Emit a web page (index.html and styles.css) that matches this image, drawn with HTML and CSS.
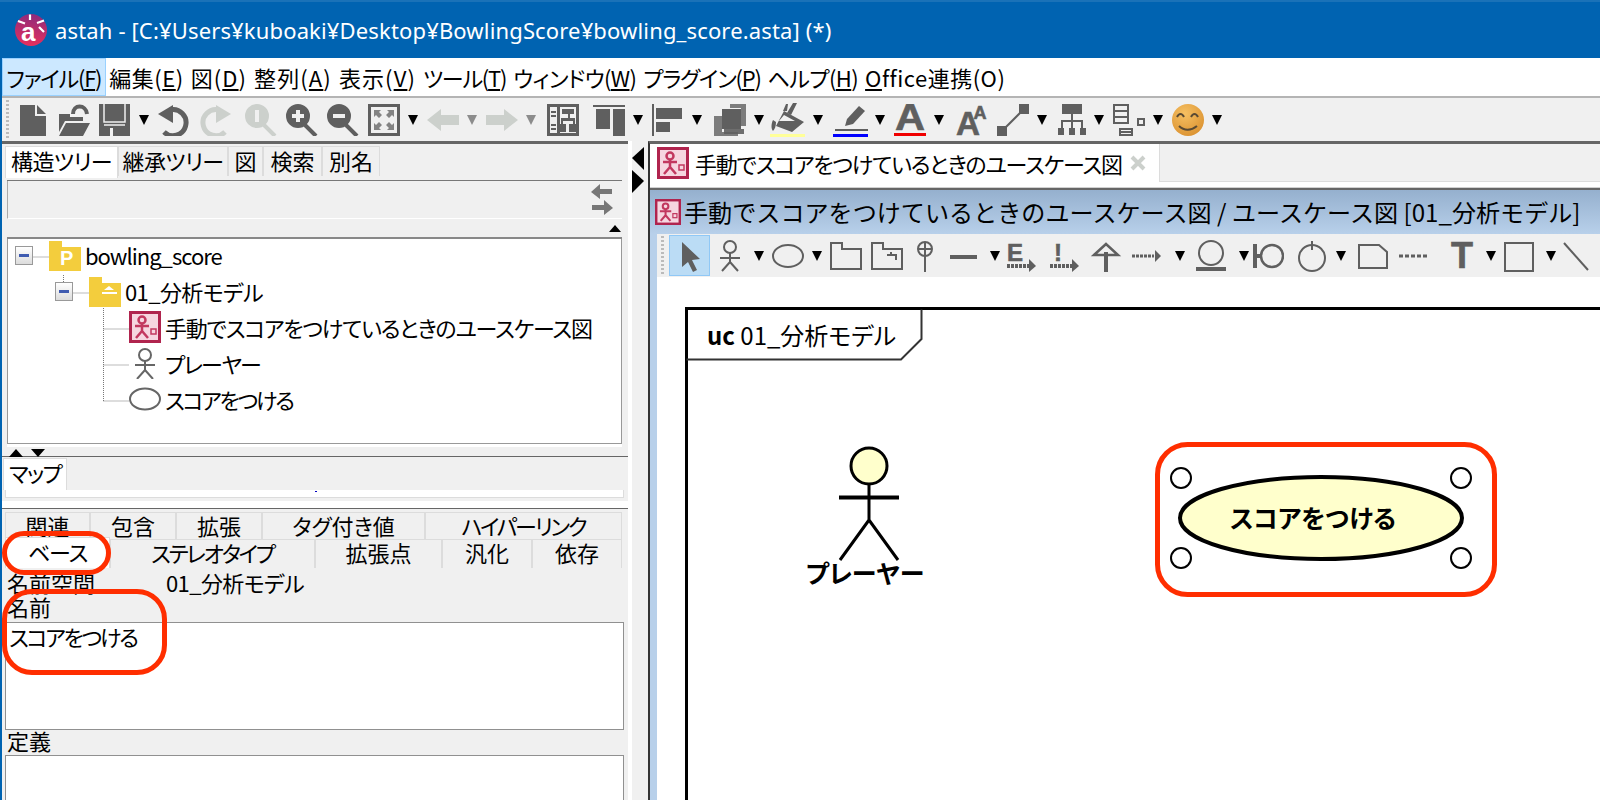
FILE: index.html
```html
<!DOCTYPE html>
<html lang="ja">
<head>
    <meta charset="UTF-8">
    <title>astah</title>
    <link rel="stylesheet" href="styles.css">
</head>
<body>
    <header class="titlebar">
        <svg class="app-logo" viewBox="0 0 32 32">
            <defs>
                <linearGradient id="logoFill" x1="0.6" y1="0" x2="0.5" y2="1">
                    <stop offset="0" stop-color="#8d2b7c"/>
                    <stop offset="1" stop-color="#e62f5c"/>
                </linearGradient>
            </defs>
            <circle cx="16" cy="16" r="16" fill="url(#logoFill)"/>
            <path d="M15 0.500v5.500M3 7l7 2.500M29 6.500l-7 2.500M24 13l5 5" stroke="#fff" stroke-width="2.200" fill="none"/>
            <text x="6" y="27" class="logo-a">a</text>
        </svg>
        <span class="app-title">astah - [C:¥Users¥kuboaki¥Desktop¥BowlingScore¥bowling_score.asta] (*)</span>
    </header>

    <div class="window">
        <nav class="menubar">
            <span class="menu active tight2">ファイル(<u>F</u>)</span>
            <span class="menu wide1">編集(<u>E</u>)</span>
            <span class="menu wide2">図(<u>D</u>)</span>
            <span class="menu wide2">整列(<u>A</u>)</span>
            <span class="menu wide2">表示(<u>V</u>)</span>
            <span class="menu tight2">ツール(<u>T</u>)</span>
            <span class="menu tight1">ウィンドウ(<u>W</u>)</span>
            <span class="menu tight2">プラグイン(<u>P</u>)</span>
            <span class="menu tight1">ヘルプ(<u>H</u>)</span>
            <span class="menu wide1"><u>O</u>ffice連携(O)</span>
        </nav>

        <div class="toolbar main-tools">
            <i class="grip"></i>
            <svg class="ic" viewBox="0 0 32 32"><path d="M3 1h15v11h11v20H3zM20 1l9 9h-9z"/></svg>
            <svg class="ic" viewBox="0 0 32 32"><path d="M1 10h11v3h13v4H7L1 28zM8 19h24l-7 13H1z"/><path d="M15 10c0-10 13-10 14 0" fill="none" stroke="currentColor" stroke-width="4"/></svg>
            <svg class="ic" viewBox="0 0 32 32"><path d="M0 0h31v32H0z"/><path d="M5 0v18h21V0M5 21h21" fill="none" stroke="#f0f0f0" stroke-width="1.500"/><path d="M11 24h3v8h-3z" fill="#f0f0f0"/></svg>
            <i class="arrow"></i>
            <svg class="ic" viewBox="0 0 32 32"><path d="M12 6a13 13 0 1 1-6 22" fill="none" stroke="currentColor" stroke-width="5"/><path d="M0 10l15-9v18z"/></svg>
            <svg class="ic off" viewBox="0 0 32 32"><path d="M20 6a13 13 0 1 0 6 22" fill="none" stroke="currentColor" stroke-width="5"/><path d="M32 10l-15-9v18z"/></svg>
            <svg class="ic off ml5" viewBox="0 0 32 32"><path fill-rule="evenodd" d="M12 0a12 12 0 1 1 0 24a12 12 0 1 1 0-24zM10 6v12h4V6z"/><path d="M19 21l11 11" stroke="currentColor" stroke-width="4"/></svg>
            <svg class="ic" viewBox="0 0 32 32"><path fill-rule="evenodd" d="M12 0a12 12 0 1 1 0 24a12 12 0 1 1 0-24zM10 6v4H6v4h4v4h4v-4h4v-4h-4V6z"/><path d="M19 21l11 11" stroke="currentColor" stroke-width="4"/></svg>
            <svg class="ic" viewBox="0 0 32 32"><path fill-rule="evenodd" d="M12 0a12 12 0 1 1 0 24a12 12 0 1 1 0-24zM6 10v4h12v-4z"/><path d="M19 21l11 11" stroke="currentColor" stroke-width="4"/></svg>
            <svg class="ic" viewBox="0 0 32 32"><path fill-rule="evenodd" d="M0 0h32v32H0zM3 3v26h26V3z"/><path d="M6 6h7l-2 2 3 3-3 3-3-3-2 2zM26 6v7l-2-2-3 3-3-3 3-3-2-2zM6 26v-7l2 2 3-3 3 3-3 3 2 2zM26 26h-7l2-2-3-3 3-3 3 3 2-2z" opacity=".75"/></svg>
            <i class="arrow"></i>
            <svg class="ic off" viewBox="0 0 32 32"><path d="M0 16L14 5v6h18v10H14v6z"/></svg>
            <i class="arrow dim"></i>
            <svg class="ic off" viewBox="0 0 32 32"><path d="M32 16L18 5v6H0v10h18v6z"/></svg>
            <i class="arrow dim"></i>
            <svg class="ic ml2" viewBox="0 0 32 32"><path fill-rule="evenodd" d="M0 0h32v32H0zM3 3v26h7V3zM13 3v26h16V3z"/><path d="M4 7h5v2H4zM4 11h5v2H4zM4 20h5v2H4zM4 24h5v2H4zM15 5h12v5h-4v4h5v6h2v8h-8v-8h4v-3H16v3h3v8h-8v-8h3v-6h7v-4h-6z"/></svg>
            <svg class="ic ml5" viewBox="0 0 32 32"><path d="M0 1h32v2H0zM3 5h14v20H3zM20 5h12v31H20z"/></svg>
            <i class="arrow"></i>
            <svg class="ic" viewBox="0 0 32 32"><path d="M0 0h2v32H0zM4 4h26v11H4zM4 18h14v10H4z"/></svg>
            <i class="arrow"></i>
            <svg class="ic ml3" viewBox="0 0 32 32"><path d="M10 6h5v19h15v5H10z" opacity=".9"/><path d="M0 12h8v16h16v4H0zM16 0h16v22h-5V4H16z" opacity=".8"/><path d="M8 5h19v20H8z"/></svg>
            <i class="arrow"></i>
            <svg class="ic wide-ic" viewBox="0 0 32 32"><path fill-rule="evenodd" d="M11 7l20 11-12 10-16-6zM11 11l-5 6h16z"/><path d="M14 9l6-10h4l-6 12zM10 7l3-7h2l-1 7zM0 16c-2 4-2 9 0 11 2-2 3-5 3-9z"/><path d="M-3 30h35v3H-3z" fill="#ffff99"/></svg>
            <i class="arrow"></i>
            <svg class="ic wide-ic" viewBox="0 0 32 32"><path d="M13 22l2-7L27 2l6 5-12 13z"/><path d="M3 25h33v2H3z"/><path d="M1 30h35v3H1z" fill="#0000ff"/></svg>
            <i class="arrow ml2"></i>
            <svg class="ic" viewBox="0 0 32 32"><text x="16" y="26" class="ic-letter" textLength="30" lengthAdjust="spacingAndGlyphs">A</text><path d="M0 29h32v3H0z" fill="#f00000"/></svg>
            <i class="arrow"></i>
            <svg class="ic ml3" viewBox="0 0 32 32"><text x="12" y="31" class="ic-letter big" textLength="24" lengthAdjust="spacingAndGlyphs">A</text><text x="24" y="15" class="ic-letter small">A</text></svg>
            <svg class="ic" viewBox="0 0 32 32"><path d="M0 22h10v10H0zM22 0h10v10H22z"/><path d="M7 25L25 7" stroke="currentColor" stroke-width="2"/></svg>
            <i class="arrow"></i>
            <svg class="ic" viewBox="0 0 32 32"><path d="M6 0h20v10H6zM15 10h2v6h10v8h-2v-6h-8v6h-2v-6H7v6H5v-8h10zM2 24h6v7H2zM13 24h6v7h-6zM24 24h6v7h-6z"/></svg>
            <i class="arrow mn3"></i>
            <svg class="ic" viewBox="0 0 32 32"><path fill-rule="evenodd" d="M0 0h16v20H0zM2 2v4h12V2zM2 8v4h12V8zM2 14v4h12v-4zM6 24h14v8H6zM8 26v1h10v-1zM8 29v1h10v-1zM24 14h8v8h-8zM26 16v4h4v-4z"/></svg>
            <i class="arrow"></i>
            <svg class="ic smile" viewBox="0 0 32 32">
                <defs>
                    <radialGradient id="smileFill" cx="0.4" cy="0.3" r="0.8">
                        <stop offset="0" stop-color="#f6c062"/>
                        <stop offset="1" stop-color="#d98f2e"/>
                    </radialGradient>
                </defs>
                <circle cx="16" cy="16" r="16" fill="url(#smileFill)"/>
                <path d="M5 13c2-4 5-4 7 0M19 13c2-4 5-4 7 0M7 22c5 5 12 5 18 0" fill="none" stroke="#5a4a33" stroke-width="2"/>
            </svg>
            <i class="arrow"></i>
        </div>

        <div class="workspace">
            <section class="left">
                <div class="tabs">
                    <span class="tab active tight1">構造ツリー</span>
                    <span class="tab tight1">継承ツリー</span>
                    <span class="tab">図</span>
                    <span class="tab">検索</span>
                    <span class="tab">別名</span>
                </div>
                <div class="tree-box">
                    <div class="tree-tools">
                        <svg class="swap" viewBox="0 0 24 34"><path d="M1 9l9-8v5h12v5H10v5zM23 25l-9-8v5H2v5h12v5z"/></svg>
                    </div>
                    <div class="tree-strip"><i class="mini-up"></i></div>
                    <div class="tree">
                        <svg class="tree-lines" viewBox="0 0 612 204">
                            <path d="M25.500 18H41M55.500 36v10M65.500 54H81M95.500 69v93M95.500 90H121M95.500 126H121M95.500 162H121"/>
                        </svg>
                        <div class="tree-row lv0">
                            <i class="expander"></i>
                            <svg class="tree-ic" viewBox="0 0 32 32"><path class="folder" d="M0 2h13v6h19v24H0z"/><text x="11" y="26" class="folder-p">P</text></svg>
                            <span class="latin-tight">bowling_score</span>
                        </div>
                        <div class="tree-row lv1">
                            <i class="expander"></i>
                            <svg class="tree-ic" viewBox="0 0 32 32"><path class="folder" d="M0 2h13v6h19v24H0z"/><path d="M15 15l5-4 5 4zM13 17h15v2H13z" fill="#fff"/></svg>
                            <span class="tight1">01_分析モデル</span>
                        </div>
                        <div class="tree-row lv2">
                            <svg class="tree-ic" viewBox="0 0 32 32"><use href="#ucIcon"/></svg>
                            <span class="tight2">手動でスコアをつけているときのユースケース図</span>
                        </div>
                        <div class="tree-row lv2">
                            <svg class="tree-ic" viewBox="0 0 32 32"><circle cx="16" cy="8" r="6" fill="none" stroke="#666" stroke-width="2"/><path d="M16 14v9M6 18h20M16 23L8 32M16 23l8 9" fill="none" stroke="#666" stroke-width="2"/></svg>
                            <span class="tight3">プレーヤー</span>
                        </div>
                        <div class="tree-row lv2">
                            <svg class="tree-ic" viewBox="0 0 32 32"><ellipse cx="16" cy="16" rx="15" ry="10.500" fill="none" stroke="#666" stroke-width="2"/></svg>
                            <span class="tight4">スコアをつける</span>
                        </div>
                    </div>
                </div>
                <div class="split-handle"><i class="mini-up wide"></i><i class="mini-down wide"></i></div>
                <div class="map-area">
                    <div class="map-tabs"><span class="tab active tight3">マップ</span></div>
                    <div class="map-view"><i class="map-dot"></i></div>
                </div>
                <div class="detail">
                    <div class="detail-tabs row-top">
                        <span class="dtab">関連</span>
                        <span class="dtab">包含</span>
                        <span class="dtab">拡張</span>
                        <span class="dtab">タグ付き値</span>
                        <span class="dtab tight4">ハイパーリンク</span>
                    </div>
                    <div class="detail-tabs row-bottom">
                        <span class="dtab active tight2">ベース</span>
                        <span class="dtab tight4">ステレオタイプ</span>
                        <span class="dtab">拡張点</span>
                        <span class="dtab">汎化</span>
                        <span class="dtab">依存</span>
                    </div>
                    <div class="ns-row"><span class="ns-label">名前空間</span><span class="tight1">01_分析モデル</span></div>
                    <div class="field-label">名前</div>
                    <div class="field name-field tight4">スコアをつける</div>
                    <div class="field-label def-label">定義</div>
                    <div class="field def-field"></div>
                </div>
                <i class="ring ring-base"></i>
                <i class="ring ring-name"></i>
            </section>

            <div class="splitter">
                <i class="tri-left"></i>
                <i class="tri-right"></i>
            </div>

            <section class="right">
                <div class="doc-tabs">
                    <span class="doc-tab">
                        <svg class="doc-ic" viewBox="0 0 32 32">
                            <symbol id="ucIcon" viewBox="0 0 32 32">
                                <rect x="1.500" y="1.500" width="29" height="29" fill="#f6d6e0" stroke="#b0244e" stroke-width="3"/>
                                <circle cx="13" cy="9" r="3.500" fill="none" stroke="#c2385f" stroke-width="2.500"/>
                                <path d="M13 12v8M6 15h14M13 20l-6 7M13 20l6 7" fill="none" stroke="#c2385f" stroke-width="2.500"/>
                                <rect x="22" y="18" width="5" height="5" fill="none" stroke="#c2385f" stroke-width="1.500"/>
                            </symbol>
                            <use href="#ucIcon"/>
                        </svg>
                        <span class="doc-name tight2">手動でスコアをつけているときのユースケース図</span>
                        <svg class="doc-close" viewBox="0 0 16 16"><path d="M2 2l12 12M14 2L2 14" stroke="#ccd0cc" stroke-width="4"/></svg>
                    </span>
                </div>
                <div class="doc-gap"></div>
                <div class="doc-head">
                    <svg class="head-ic" viewBox="0 0 32 32"><use href="#ucIcon"/></svg>
                    <span>手動でスコアをつけているときのユースケース図 / ユースケース図 [01_分析モデル]</span>
                </div>
                <div class="doc-body">
                    <div class="toolbar diagram-tools">
                        <i class="grip"></i>
                        <span class="sel"><svg class="ic" viewBox="0 0 32 32"><path d="M8 2l18 17-8 1 5 10-4 2-5-10-6 5z"/></svg></span>
                        <svg class="ic" viewBox="0 0 32 32"><g fill="none" stroke="currentColor" stroke-width="2"><circle cx="16" cy="7" r="6"/><path d="M16 13v9M6 18h20M16 22L8 31M16 22l8 9"/></g></svg>
                        <i class="arrow"></i>
                        <svg class="ic mn1" viewBox="0 0 32 32"><ellipse cx="16" cy="16" rx="15" ry="11" fill="none" stroke="currentColor" stroke-width="2"/></svg>
                        <i class="arrow"></i>
                        <svg class="ic mn1" viewBox="0 0 32 32"><path d="M1 29V3h11v6h19v20z" fill="none" stroke="currentColor" stroke-width="2"/></svg>
                        <svg class="ic" viewBox="0 0 32 32"><path d="M1 29V3h11v6h19v20zM16 15h9v5M20 15v-3" fill="none" stroke="currentColor" stroke-width="2"/></svg>
                        <svg class="ic mn3" viewBox="0 0 32 32"><g fill="none" stroke="currentColor" stroke-width="2"><circle cx="16" cy="9" r="7"/><path d="M16 2v30M9 9h14"/></g></svg>
                        <svg class="ic" viewBox="0 0 32 32"><path d="M0 15h27v4H0z"/></svg>
                        <i class="arrow"></i>
                        <svg class="ic mn3" viewBox="0 0 32 32"><text x="9" y="21" class="ic-letter tiny">E</text><path d="M1 26h22" stroke="currentColor" stroke-width="4" stroke-dasharray="3 1"/><path d="M23 19l7 7-7 6z"/></svg>
                        <svg class="ic ml2" viewBox="0 0 32 32"><text x="9" y="21" class="ic-letter tiny">!</text><path d="M1 26h22" stroke="currentColor" stroke-width="4" stroke-dasharray="3 1"/><path d="M23 19l7 7-7 6z"/></svg>
                        <svg class="ic" viewBox="0 0 32 32"><path d="M14 12h4v20h-4z"/><path d="M4 15L16 4l12 11z" fill="none" stroke="currentColor" stroke-width="2.500"/></svg>
                        <svg class="ic" viewBox="0 0 32 32"><path d="M1 16h22" stroke="currentColor" stroke-width="3" stroke-dasharray="3 1"/><path d="M24 10l6 6-6 6z"/></svg>
                        <i class="arrow ml3"></i>
                        <svg class="ic ml1" viewBox="0 0 32 32"><circle cx="16" cy="13" r="12" fill="none" stroke="currentColor" stroke-width="2"/><path d="M1 27h30v4H1z"/></svg>
                        <i class="arrow ml3"></i>
                        <svg class="ic mn6" viewBox="0 0 32 32"><path d="M1 4h4v24H1zM5 14h4v4H5z"/><circle cx="20" cy="16" r="11" fill="none" stroke="currentColor" stroke-width="2.500"/></svg>
                        <svg class="ic ml3" viewBox="0 0 32 32"><circle cx="16" cy="18" r="13" fill="none" stroke="currentColor" stroke-width="2"/><path d="M15 1h2v9h-2z"/></svg>
                        <i class="arrow"></i>
                        <svg class="ic ml2" viewBox="0 0 32 32"><path d="M2 5h20l8 7v16H2z" fill="none" stroke="currentColor" stroke-width="2"/></svg>
                        <svg class="ic" viewBox="0 0 32 32"><path d="M1 16h29" stroke="currentColor" stroke-width="3" stroke-dasharray="4 2"/></svg>
                        <svg class="ic ml7" viewBox="0 0 32 32"><text x="16" y="28" class="ic-letter">T</text></svg>
                        <i class="arrow"></i>
                        <svg class="ic mn2" viewBox="0 0 32 32"><path d="M2 3h28v28H2z" fill="none" stroke="currentColor" stroke-width="2"/></svg>
                        <i class="arrow ml2"></i>
                        <svg class="ic mn3" viewBox="0 0 32 32"><path d="M2 3l24 27" stroke="currentColor" stroke-width="2"/></svg>
                    </div>
                    <svg class="canvas" viewBox="657 277 943 523">
                        <path class="frame" d="M686.500 800V308.500H1600"/>
                        <path class="frame-tag" d="M686.500 359.500H901L921.500 339V309.500"/>
                        <text x="707" y="345" class="cv-text"><tspan class="cv-bold">uc</tspan> 01_分析モデル</text>

                        <circle class="shape head" cx="869" cy="466" r="18"/>
                        <path class="stick" d="M869 484v36M869 520l-29 40M869 520l29 40"/>
                        <path class="arms" d="M839 497.500h60"/>
                        <text x="865" y="583" class="cv-label">プレーヤー</text>

                        <ellipse class="shape" cx="1321" cy="518" rx="141" ry="41"/>
                        <text x="1313" y="528" class="cv-label">スコアをつける</text>
                        <circle class="port" cx="1181" cy="478" r="10"/>
                        <circle class="port" cx="1461" cy="478" r="10"/>
                        <circle class="port" cx="1181" cy="558" r="10"/>
                        <circle class="port" cx="1461" cy="558" r="10"/>
                        <rect class="ring-shape" x="1157.500" y="444.500" width="337" height="150" rx="30"/>
                    </svg>
                </div>
            </section>
        </div>
    </div>
</body>
</html>
```

FILE: styles.css
```css
* {
    box-sizing: border-box;
}

html, body {
    margin: 0;
    height: 800px;
    overflow: hidden;
}

body {
    width: 1600px;
    font-family: "Noto Sans CJK JP", "Noto Sans", sans-serif;
    font-feature-settings: "palt";
    font-size: 22px;
    line-height: 30px;
    color: #000;
    background-color: #fff;
}

i {
    display: block;
}

/* kana in the reference font runs narrower than in Noto */
.tight1 { letter-spacing: -0.6px; }
.tight2 { letter-spacing: -1.2px; }
.tight3 { letter-spacing: -1.7px; }
.tight4 { letter-spacing: -2.2px; }
.latin-tight { letter-spacing: -1px; }
.wide1 { letter-spacing: 0.5px; }
.wide2 { letter-spacing: 1.1px; }

/* title bar */
.titlebar {
    height: 58px;
    display: flex;
    align-items: center;
    padding-left: 15px;
    background-color: #0063b1;
    border-top: 2px solid #1a72b8;
    color: #fff;
}

.app-logo {
    width: 32px;
    height: 32px;
}

.logo-a {
    font-family: "Liberation Sans", sans-serif;
    font-weight: bold;
    font-size: 26px;
    fill: #fff;
}

.app-title {
    margin-left: 8px;
    font-family: "Noto Sans", sans-serif;
    font-size: 22px;
    letter-spacing: 0.15px;
}

.window {
    height: 742px;
    border-left: 2px solid #0063b1;
    display: flex;
    flex-direction: column;
}

/* menu */
.menubar {
    height: 38px;
    flex-shrink: 0;
    display: flex;
    align-items: center;
    background-color: #fff;
}

.menu {
    height: 38px;
    padding: 0 3.5px;
    line-height: 38px;
    white-space: nowrap;
}

.menu.active {
    background-color: #cce8ff;
    border: 1px solid #99d1ff;
    line-height: 36px;
}

/* toolbars */
.toolbar {
    display: flex;
    align-items: center;
    gap: 8px;
    background-color: #f0f0f0;
    padding-left: 4px;
    color: #5f5f5f;
}

.main-tools {
    height: 45px;
    flex-shrink: 0;
    border-top: 2px solid #b4b4b4;
}

.grip {
    width: 3px;
    height: 40px;
    flex-shrink: 0;
    background-image: linear-gradient(#bbb 50%, transparent 50%);
    background-size: 3px 4px;
}

.ic {
    width: 32px;
    height: 32px;
    margin-right: 1px;
    flex-shrink: 0;
    fill: currentColor;
}

.ic.off {
    color: #ccd0cc;
}

.wide-ic {
    overflow: visible;
}

.ic-letter {
    font-family: "Liberation Sans", sans-serif;
    font-weight: bold;
    font-size: 36px;
    text-anchor: middle;
    fill: currentColor;
    stroke: currentColor;
    stroke-width: 0.6;
}

.ic-letter.big {
    font-size: 34px;
}

.ic-letter.small {
    font-size: 18px;
}

.ic-letter.tiny {
    font-size: 24px;
}

.arrow {
    width: 0;
    height: 0;
    flex-shrink: 0;
    margin-left: -1px;
    margin-right: 1px;
    border-left: 5px solid transparent;
    border-right: 5px solid transparent;
    border-top: 10px solid #000;
}

.arrow.dim {
    border-top-color: #8c8c8c;
}

.ml1 { margin-left: 1px; }
.ml2 { margin-left: 2px; }
.ml3 { margin-left: 3px; }
.ml5 { margin-left: 5px; }
.ml7 { margin-left: 7px; }
.mn1 { margin-left: -1px; }
.mn2 { margin-left: -2px; }
.mn3 { margin-left: -3px; }
.mn6 { margin-left: -6px; }

/* panels */
.workspace {
    flex: 1;
    min-height: 0;
    display: flex;
    background-color: #f0f0f0;
}

.left {
    width: 626px;
    flex-shrink: 0;
    position: relative;
    border-top: 3px solid #666;
    background-color: #f0f0f0;
}

.tabs {
    height: 32px;
    display: grid;
    grid-template-columns: 113px 110px 35px 59px 58px;
    width: 378px;
    margin-left: 3px;
    padding-top: 2px;
    text-align: center;
}

.tab {
    height: 30px;
    border: 1px solid #dcdcdc;
    border-bottom: none;
    line-height: 27px;
    white-space: nowrap;
}

.tab.active {
    height: 32px;
    background-color: #fff;
}

.tree-box {
    margin: 4px 6px 0 5px;
    border-top: 1px solid #777;
}

.tree-tools {
    height: 38px;
    display: flex;
    justify-content: flex-end;
    align-items: center;
    padding-right: 8px;
    border-left: 1px solid #aaa;
    border-bottom: 1px solid #fff;
}

.swap {
    width: 24px;
    height: 34px;
    fill: #777;
}

.tree-strip {
    height: 20px;
    position: relative;
    display: flex;
    justify-content: flex-end;
    align-items: center;
    padding-right: 1px;
    border-bottom: 2px solid #888;
}

.mini-up, .mini-down {
    width: 0;
    height: 0;
    border-left: 6px solid transparent;
    border-right: 6px solid transparent;
}

.mini-up {
    border-bottom: 7px solid #000;
}

.mini-down {
    border-top: 7px solid #000;
}

.mini-up.wide, .mini-down.wide {
    border-left-width: 7px;
    border-right-width: 7px;
    border-bottom-width: 8px;
    border-top-width: 8px;
}

.mini-up.wide {
    border-top: none;
}

.mini-down.wide {
    border-bottom: none;
}

.tree {
    display: flow-root;
    height: 205px;
    position: relative;
    background-color: #fff;
    border: 1px solid #999;
    border-top: none;
    box-shadow: 0 3px 0 #fff;
}

.tree-lines {
    position: absolute;
    left: 0;
    top: 0;
    width: 612px;
    height: 204px;
}

.tree-lines path {
    fill: none;
    stroke: #777;
    stroke-dasharray: 1 1;
}

.tree-row {
    height: 36px;
    display: flex;
    align-items: center;
    gap: 4px;
    position: relative;
    white-space: nowrap;
}

.lv0 {
    padding-left: 7px;
    margin-top: -2px;
}

.lv1 { padding-left: 47px; }
.lv2 { padding-left: 121px; }

.expander {
    width: 18px;
    height: 19px;
    margin-right: 12px;
    position: relative;
    border: 1px solid #999;
    background: linear-gradient(#fff, #dcdcdc);
}

.expander::after {
    content: "";
    position: absolute;
    left: 3px;
    top: 7px;
    width: 10px;
    height: 3px;
    background-color: #3f5bb0;
}

.tree-ic {
    width: 32px;
    height: 32px;
    flex-shrink: 0;
}

.folder {
    fill: #f3cd3d;
}

.folder-p {
    font-family: "Liberation Sans", sans-serif;
    font-weight: bold;
    font-size: 20px;
    fill: #fff;
}

.split-handle {
    height: 13px;
    margin-top: 0;
    padding: 5px 0 0 7px;
    display: flex;
    gap: 8px;
    border-bottom: 1px solid #666;
}

.map-tabs {
    height: 33px;
    padding: 1px 0 0 1px;
    display: flex;
}

.map-tabs .tab {
    width: 64px;
    text-align: center;
    border-top: 1px solid #dcdcdc;
}

.map-view {
    height: 8px;
    margin: 0 4px 0 3px;
    background-color: #fff;
    border: 1px solid #dcdcdc;
    border-top: none;
    position: relative;
}

.map-dot {
    position: absolute;
    left: 309px;
    top: 1px;
    width: 2px;
    height: 1px;
    background-color: #0000c0;
}

.detail {
    margin-top: 3px;
    padding-top: 8px;
    background: linear-gradient(#fff 7px, #666 7px, #666 8px, #f0f0f0 8px);
}

.detail-tabs {
    display: grid;
    margin-left: 3px;
    margin-right: 4px;
    text-align: center;
}

.row-top {
    height: 27px;
    margin-top: 3px;
    grid-template-columns: 85px 86px 86px 163px 197px;
    overflow: hidden;
}

.row-bottom {
    height: 29px;
    grid-template-columns: 105px 205px 127px 90px 90px;
}

.dtab {
    border: 1px solid #dcdcdc;
    border-bottom: none;
    line-height: 25px;
    white-space: nowrap;
}

.row-top .dtab {
    line-height: 24px;
}

.dtab.active {
    height: 31px;
    margin-top: -2px;
    position: relative;
    background-color: #fff;
    line-height: 27px;
}

.ns-row {
    height: 25px;
    margin-top: 3px;
    padding-left: 5px;
    display: flex;
    line-height: 22px;
    white-space: nowrap;
    overflow: hidden;
}

.ns-label {
    width: 159px;
}

.field-label {
    height: 26px;
    padding-left: 5px;
    line-height: 21px;
}

.field {
    margin: 0 4px 0 3px;
    padding: 0 3px;
    background-color: #fff;
    border: 1px solid #909090;
}

.name-field {
    height: 108px;
    line-height: 26px;
}

.def-label {
    height: 25px;
    line-height: 20px;
}

.def-field {
    height: 60px;
}

.ring {
    position: absolute;
    border: 5px solid #ff2e00;
}

.ring-base {
    left: 0;
    top: 387px;
    width: 109px;
    height: 44px;
    border-radius: 22px;
}

.ring-name {
    left: 0;
    top: 445px;
    width: 165px;
    height: 86px;
    border-radius: 30px;
}

.splitter {
    width: 20px;
    flex-shrink: 0;
    padding: 6px 0 0 4px;
    background: linear-gradient(90deg, #fff 4px, #f0f0f0 4px);
}

.tri-left, .tri-right {
    width: 0;
    height: 0;
    border-top: 11px solid transparent;
    border-bottom: 12px solid transparent;
}

.tri-left {
    border-right: 12px solid #000;
}

.tri-right {
    border-left: 12px solid #000;
}

.right {
    flex: 1;
    min-width: 0;
    border-top: 3px solid #666;
    border-left: 2px solid #333;
    display: flex;
    flex-direction: column;
}

.doc-tabs {
    height: 38px;
    flex-shrink: 0;
    display: flex;
    background-color: #f0f0f0;
    border-bottom: 1px solid #dcdcdc;
}

.doc-tab {
    width: 510px;
    height: 38px;
    display: flex;
    align-items: center;
    padding-left: 7px;
    background-color: #fff;
    border-right: 1px solid #dcdcdc;
}

.doc-ic {
    width: 32px;
    height: 32px;
    flex-shrink: 0;
}

.doc-name {
    margin-left: 6px;
    white-space: nowrap;
}

.doc-close {
    width: 16px;
    height: 16px;
    flex-shrink: 0;
    margin-left: auto;
    margin-right: 13px;
}

.doc-gap {
    height: 6px;
    flex-shrink: 0;
    background-color: #fff;
    border-bottom: 1px solid #d0d0d0;
}

.doc-head {
    height: 46px;
    flex-shrink: 0;
    display: flex;
    align-items: center;
    gap: 3px;
    padding-left: 5px;
    border-top: 2px solid #666;
    background: linear-gradient(#95b0ce, #b8d0ea);
    font-size: 24.1px;
    font-feature-settings: normal;
    white-space: nowrap;
}

.head-ic {
    width: 26px;
    height: 26px;
    flex-shrink: 0;
}

.doc-body {
    flex: 1;
    min-height: 0;
    display: flex;
    flex-direction: column;
    border-left: 7px solid #b8d0ea;
}

.diagram-tools {
    height: 43px;
    flex-shrink: 0;
    overflow: hidden;
}

.sel {
    width: 41px;
    height: 41px;
    margin-left: -3px;
    margin-right: -4px;
    flex-shrink: 0;
    display: flex;
    align-items: center;
    justify-content: center;
    background-color: #bbdcf5;
    border: 1px solid #90c8f6;
}

.sel .ic {
    margin-right: 0;
}

.canvas {
    width: 943px;
    height: 523px;
    flex-shrink: 0;
    background-color: #fff;
}

.frame {
    fill: none;
    stroke: #000;
    stroke-width: 3;
}

.frame-tag {
    fill: none;
    stroke: #333;
    stroke-width: 2;
}

.cv-text {
    font-size: 24px;
}

.cv-bold, .cv-label {
    font-weight: bold;
}

.cv-label {
    font-size: 25px;
    text-anchor: middle;
}

.shape {
    fill: #ffffcc;
    stroke: #000;
    stroke-width: 4;
}

.head {
    stroke-width: 3;
}

.stick {
    fill: none;
    stroke: #000;
    stroke-width: 3;
}

.arms {
    fill: none;
    stroke: #000;
    stroke-width: 4;
}

.port {
    fill: #fff;
    stroke: #000;
    stroke-width: 2;
}

.ring-shape {
    fill: none;
    stroke: #ff2e00;
    stroke-width: 5;
}
```
